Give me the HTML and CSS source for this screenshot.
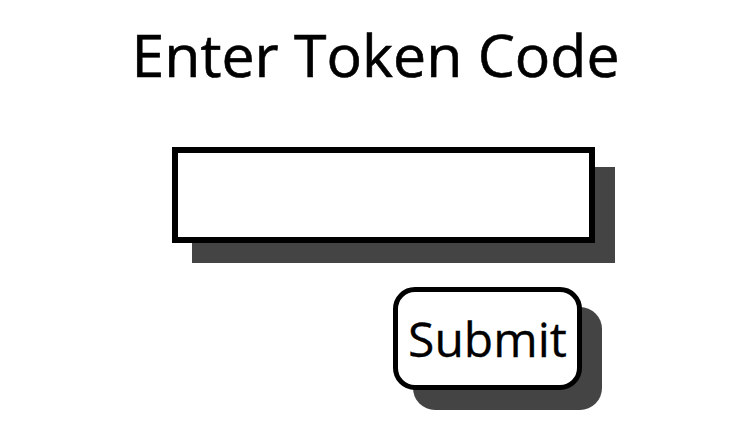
FILE: index.html
```html
<!DOCTYPE html>
<html>
<head>
<meta charset="utf-8">
<link rel="stylesheet" href="styles.css">
</head>
<body>
<main class="page">
  <h1 class="title">Enter Token Code</h1>
  <form class="token-form">
    <input class="token-input" type="text">
    <button class="submit-btn" type="button">Submit</button>
  </form>
</main>
</body>
</html>
```
FILE: styles.css
```css
html, body {
  margin: 0;
  padding: 0;
  background: #fff;
}
.page {
  width: 755px;
  height: 439px;
  font-family: "Open Sans", sans-serif;
  color: #000;
}
.title {
  margin: 0;
  padding-top: 20px;
  padding-right: 4px;
  text-align: center;
  font-size: 59px;
  font-weight: 400;
  line-height: 69px;
  -webkit-text-stroke: 0.6px #000;
}
.token-form {
  display: flex;
  flex-direction: column;
  align-items: flex-start;
  padding-left: 172px;
  padding-top: 58px;
}
.token-input {
  box-sizing: border-box;
  width: 423px;
  height: 96px;
  border: 6px solid #000;
  background: #fff;
  box-shadow: 20px 20px 0 #444;
  outline: none;
  margin: 0;
}
.submit-btn {
  box-sizing: border-box;
  margin: 44px 0 0 221px;
  width: 189px;
  height: 103px;
  border: 5px solid #000;
  border-radius: 22px;
  background: #fff;
  box-shadow: 20px 20px 0 #444;
  font-family: "Open Sans", sans-serif;
  font-size: 48px;
  color: #000;
  padding: 0;
  -webkit-text-stroke: 0.3px #000;
}
```
